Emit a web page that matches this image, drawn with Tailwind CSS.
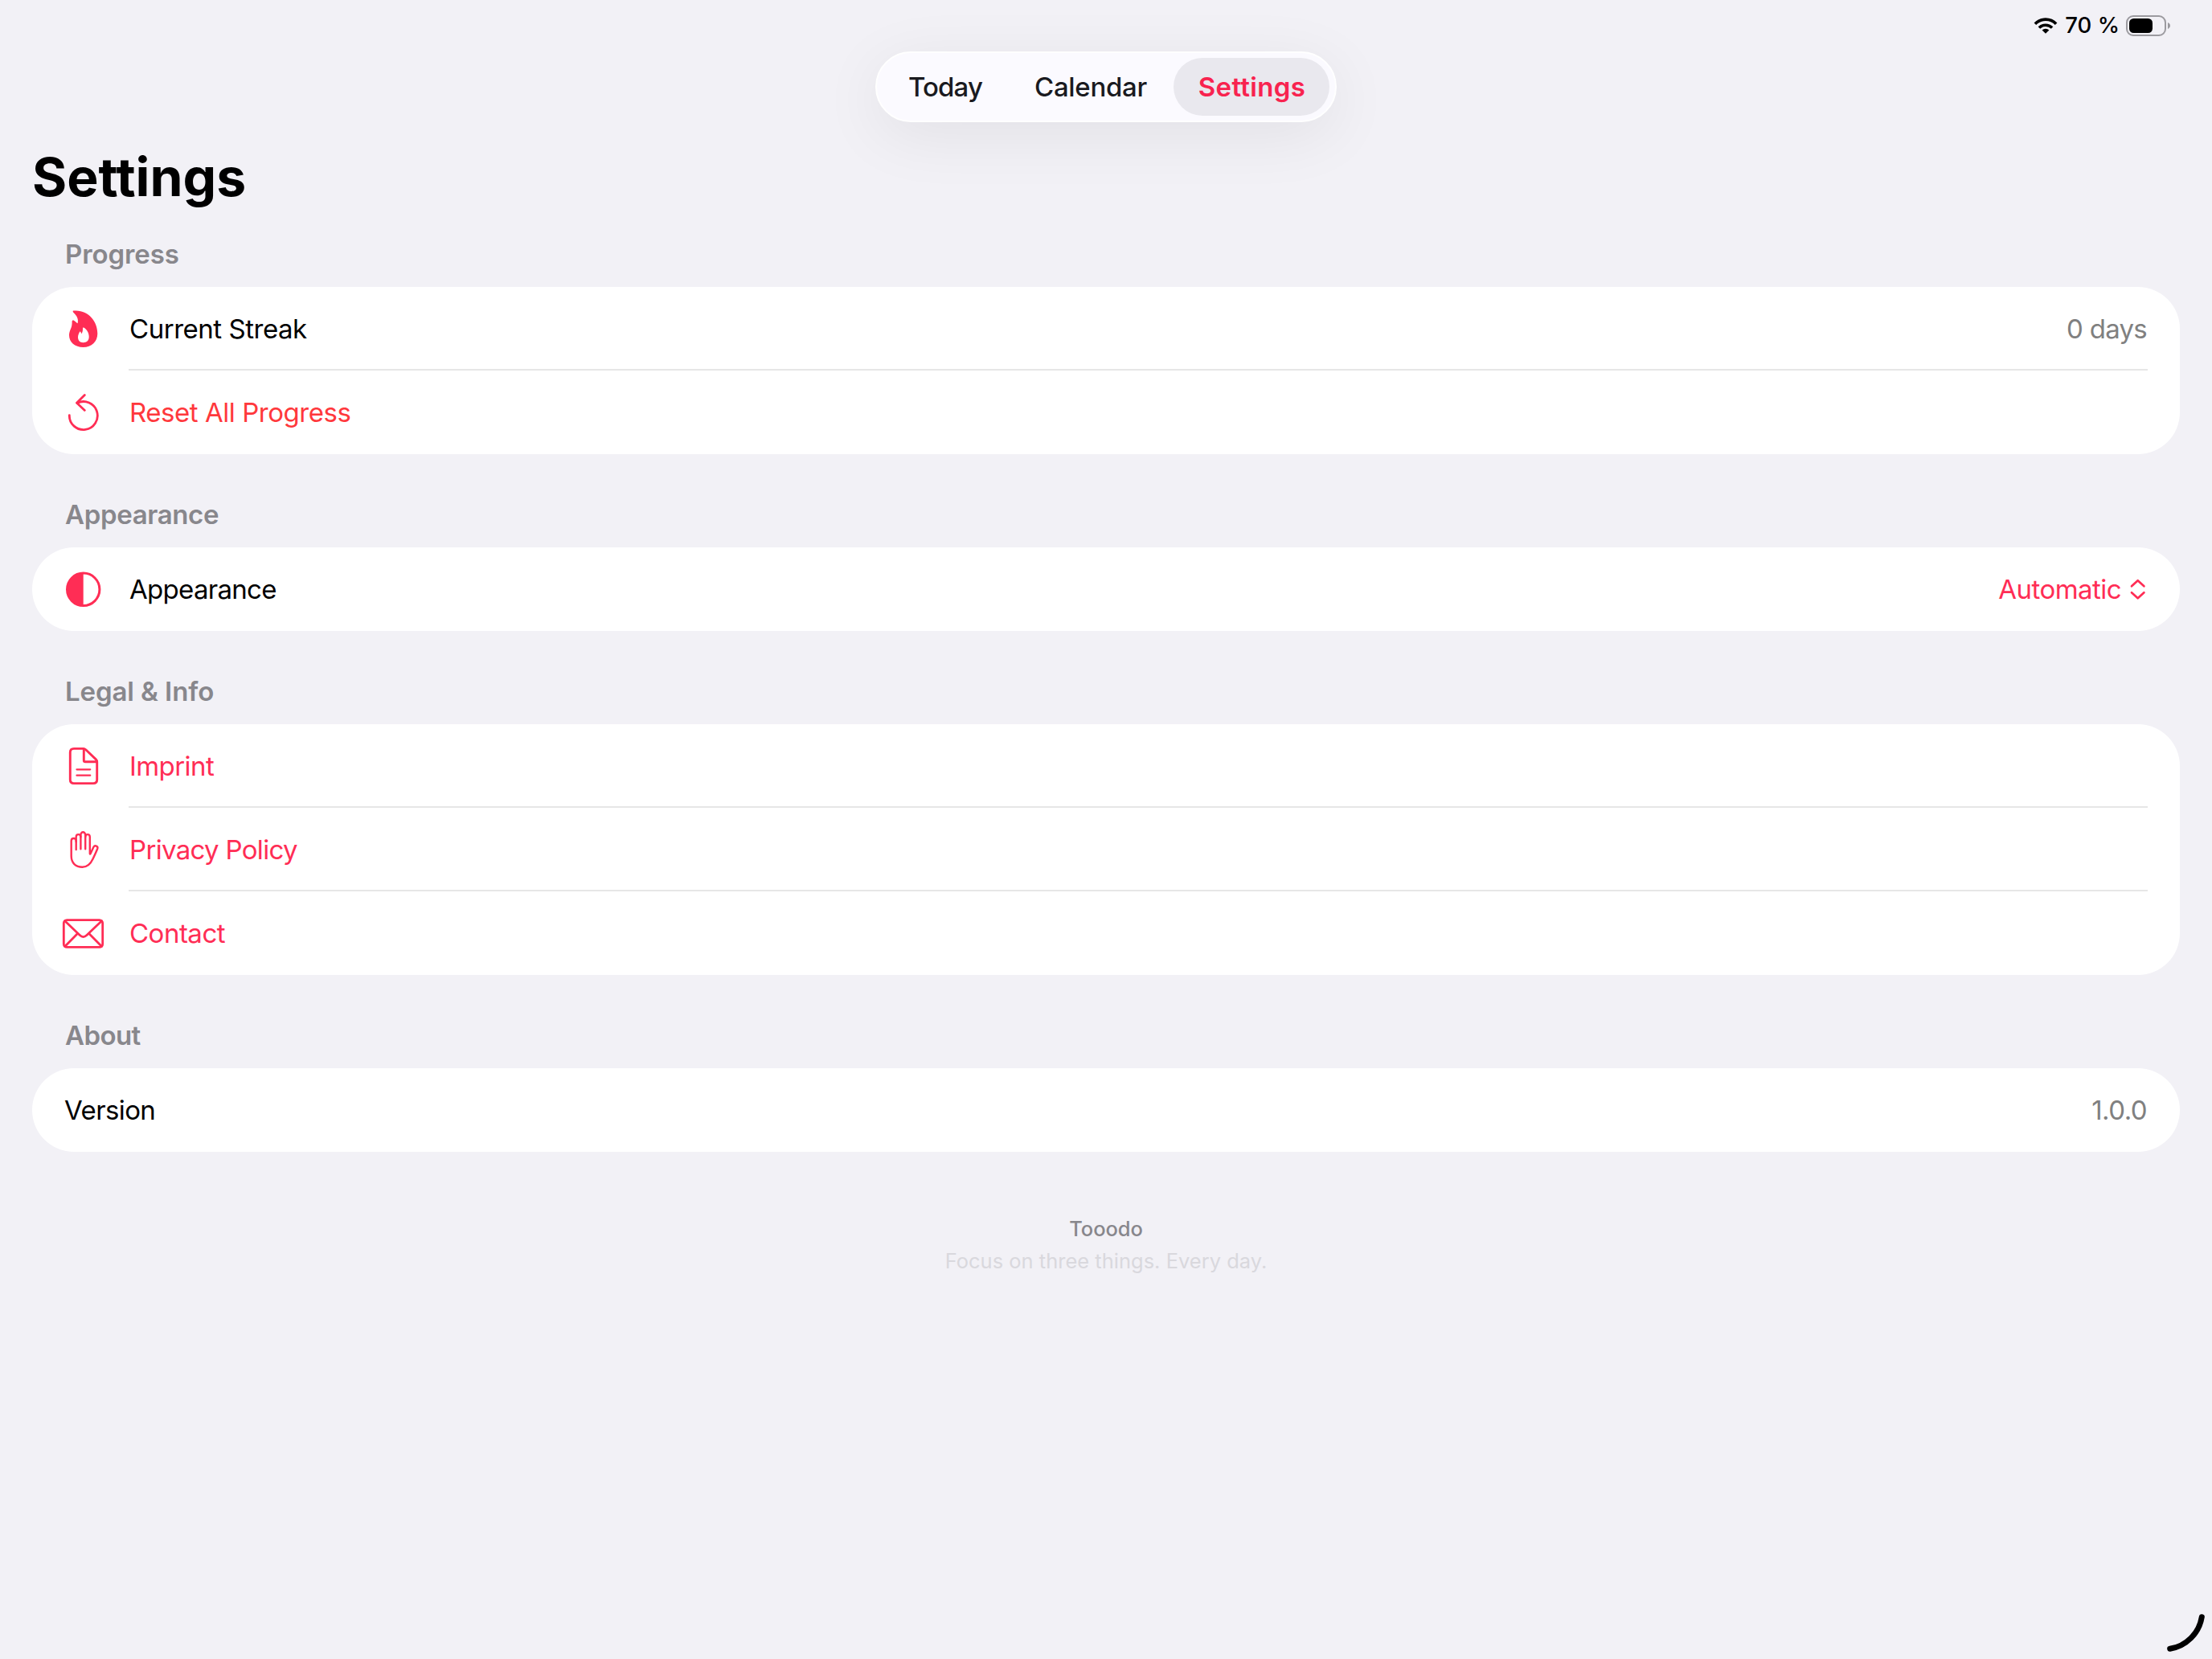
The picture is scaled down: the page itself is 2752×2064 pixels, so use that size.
<!DOCTYPE html>
<html lang="en">
  <head>
    <meta charset="UTF-8" />
    <meta name="viewport" content="width=device-width, initial-scale=1.0" />
    <title>Tooodo – Settings</title>
    <script src="https://cdn.jsdelivr.net/npm/@tailwindcss/browser@4"></script>
  </head>
  <body class="relative min-h-screen overflow-x-hidden bg-[#f2f1f6] font-['Inter',sans-serif] text-[33px] leading-none text-black">
    <!-- Status bar -->
    <div class="flex h-16 items-center justify-end pr-[52px]">
      <svg class="mr-[9px] h-[22px] w-[30px]" viewBox="0 0 30 22" fill="none" stroke="black" stroke-width="3.6">
        <path d="M1.9 8.8A18 18 0 0 1 28.1 8.8" />
        <path d="M6.9 13.5A11.6 11.6 0 0 1 23.1 13.5" />
        <path d="M15 20.8L10.6 16.6A6.2 6.2 0 0 1 19.4 16.6Z" fill="black" stroke="none" />
      </svg>
      <span class="mr-[7px] text-[27.5px] font-medium">70 %</span>
      <svg class="h-7 w-14" viewBox="0 0 56 28" fill="none">
        <rect x="2" y="2" width="48" height="24" rx="8" stroke="#9b9a9f" stroke-width="2" />
        <rect x="5" y="5" width="29" height="18" rx="5.5" fill="black" />
        <path d="M53 10C54.8 10.8 56 12.2 56 14S54.8 17.2 53 18Z" fill="#9b9a9f" />
      </svg>
    </div>

    <!-- Tab bar -->
    <nav class="mx-auto flex h-[88px] w-[574px] rounded-full border-2 border-white bg-[#fbfaff] px-[7px] py-1.5 font-medium text-[#1a1a1f] shadow-[0_16px_80px_rgba(0,0,0,0.07)]">
      <a class="flex w-[156px] items-center justify-center tracking-[-0.88px]">Today</a>
      <a class="flex w-[206px] items-center justify-center tracking-[-0.3px]">Calendar</a>
      <a class="flex w-[194px] items-center justify-center rounded-full bg-[#e9e8ee] pl-px font-semibold tracking-[0.33px] text-[#f8234f]">Settings</a>
    </nav>

    <main class="mt-[13px] px-10">
      <h1 class="flex h-[110px] items-center text-[66px] font-bold">Settings</h1>

      <!-- Progress -->
      <section class="mb-[34px]">
        <h2 class="flex h-[82px] items-center pl-[41px] font-semibold tracking-[-0.1px] text-[#88878c]">Progress</h2>
        <div class="rounded-[52px] bg-white pr-10 pl-8">
          <div class="flex h-[104px] items-center">
            <svg class="mr-6 size-16" viewBox="0 0 64 64" fill="#ff2d55" fill-rule="evenodd">
              <path d="M19.5 9.6C38 8 49.3 23 49.3 38C49.3 48 42 55 31.5 55C21 55 14 48.5 14 40C14 34 18 31 17.6 23.5C17.4 21.3 19 21 20.3 21.9C22.5 23.3 23.2 24.7 24.6 25.2C26 20 23.5 16 20 12.6C18.6 11.3 18 9.8 19.5 9.6ZM32 30.6C36 32.5 38.7 37.5 38.7 42C38.7 46.8 35.5 49.2 31.5 49.2C27.6 49.2 25 46.6 25 42.5C25 39.5 26.3 37.5 27 36C27.6 35 28.4 35.6 28.6 36.5L29.2 38.3C31 36.5 31 33.5 31 31.2C31 30.5 31.4 30.3 32 30.6Z" />
            </svg>
            <div class="flex h-full flex-1 items-center justify-between px-px shadow-[inset_0_-2px_0_#e6e6e6]">
              <span class="tracking-[-0.47px]">Current Streak</span>
              <span class="tracking-[-0.74px] text-[#808080]">0 days</span>
            </div>
          </div>
          <div class="flex h-[104px] items-center">
            <svg class="mr-6 size-16" viewBox="0 0 64 64" fill="none" stroke="#ff2d55" stroke-width="2.8" stroke-linecap="round" stroke-linejoin="round">
              <path d="M14.3 35.6A17.5 17.5 0 1 0 24 20.4" />
              <path d="M33.3 10.4L23.5 20.2L33.3 29.4" />
            </svg>
            <span class="pl-px tracking-[-0.46px] text-[#ff383c]">Reset All Progress</span>
          </div>
        </div>
      </section>

      <!-- Appearance -->
      <section class="mb-[34px]">
        <h2 class="flex h-[82px] items-center pl-[41px] font-semibold tracking-[-0.35px] text-[#88878c]">Appearance</h2>
        <div class="rounded-[52px] bg-white pr-10 pl-8">
          <div class="flex h-[104px] items-center">
            <svg class="mr-6 size-16" viewBox="0 0 64 64">
              <circle cx="31.7" cy="32.3" r="20.2" fill="none" stroke="#ff2d55" stroke-width="3" />
              <path d="M31.7 12A20.3 20.3 0 0 0 31.7 52.6Z" fill="#ff2d55" />
            </svg>
            <div class="flex flex-1 items-center justify-between pl-px">
              <span class="tracking-[-0.7px]">Appearance</span>
              <span class="flex items-center gap-[9px] tracking-[-0.55px] text-[#ff2d55]">
                Automatic
                <svg class="h-8 w-6" viewBox="0 0 24 32" fill="none" stroke="#ff2d55" stroke-width="2.7" stroke-linecap="round" stroke-linejoin="round">
                  <path d="M4 12.3L11.7 5.2L19.4 12.3M4 20.2L11.7 27.3L19.4 20.2" />
                </svg>
              </span>
            </div>
          </div>
        </div>
      </section>

      <!-- Legal -->
      <section class="mb-[34px]">
        <h2 class="flex h-[82px] items-center pl-[41px] font-semibold tracking-[-0.1px] text-[#88878c]">Legal &amp; Info</h2>
        <div class="rounded-[52px] bg-white pr-10 pl-8 text-[#ff2d55]">
          <div class="flex h-[104px] items-center">
            <svg class="mr-6 size-16" viewBox="0 0 64 64" fill="none" stroke="currentColor" stroke-width="2.9" stroke-linecap="round" stroke-linejoin="round">
              <path d="M20 10.4H31.5C33 10.4 33.8 10.8 34.8 11.8L47.2 23.6C48.3 24.7 48.7 25.5 48.7 27V49C48.7 52 47 53.6 44 53.6H20C17 53.6 15.3 52 15.3 49V15C15.3 12 17 10.4 20 10.4Z" />
              <path d="M32.3 11V25C32.3 26.2 33 26.8 34.2 26.8H48" />
              <path d="M23.5 36.3H40.2M23.5 43.7H40.2" stroke-width="2.3" />
            </svg>
            <div class="flex h-full flex-1 items-center pl-px tracking-[-0.58px] shadow-[inset_0_-2px_0_#e6e6e6]">Imprint</div>
          </div>
          <div class="flex h-[104px] items-center">
            <svg class="mr-6 size-16" viewBox="0 0 64 64" fill="none" stroke="currentColor" stroke-width="2.4" stroke-linecap="round" stroke-linejoin="round">
              <path d="M22.7 32V21.2C22.7 17 16.7 17 16.7 21.2V40C16.7 48.5 22 53.7 30.5 53.7C38 53.7 41.3 48.5 43.6 43.5C45.5 39.5 48 34 49.2 31C50.4 27.5 46 26 44.3 29L40.5 37.2C40.2 37.8 39.8 37.6 39.8 37V16.3C39.8 12 34.2 12 34.2 16.3" />
              <path d="M34.2 31.2V14C34.2 9 28.4 9 28.4 14V31.2" />
              <path d="M28.4 16.3C28.4 12 22.7 12 22.7 16.3V22" />
            </svg>
            <div class="flex h-full flex-1 items-center pl-px tracking-[-0.68px] shadow-[inset_0_-2px_0_#e6e6e6]">Privacy Policy</div>
          </div>
          <div class="flex h-[104px] items-center">
            <svg class="mr-6 size-16" viewBox="0 0 64 64" fill="none" stroke="currentColor" stroke-width="2.8" stroke-linecap="round" stroke-linejoin="round">
              <rect x="7.3" y="15.6" width="48.4" height="33.8" rx="4" />
              <path d="M8.7 16.8L27.3 34.6C30.4 37.5 32.8 37.5 35.9 34.6L54.5 16.8" />
              <path d="M8.7 48.6L24.2 32.8M54.5 48.6L39 32.8" />
            </svg>
            <span class="pl-px tracking-[-0.5px]">Contact</span>
          </div>
        </div>
      </section>

      <!-- About -->
      <section>
        <h2 class="flex h-[82px] items-center pl-[41px] font-semibold tracking-[-0.6px] text-[#88878c]">About</h2>
        <div class="flex h-[104px] items-center justify-between rounded-[52px] bg-white pr-[41px] pl-10">
          <span class="tracking-[-0.6px]">Version</span>
          <span class="tracking-[-0.56px] text-[#808080]">1.0.0</span>
        </div>
      </section>

      <footer class="mt-[76px] text-center text-[25.5px] leading-10">
        <p class="font-medium tracking-[-0.1px] text-[#88878c]">Tooodo</p>
        <p class="text-[#d9d8dd]">Focus on three things. Every day.</p>
      </footer>
    </main>

    <!-- Window resize handle -->
    <svg class="absolute top-[1964px] right-0 size-[100px]" viewBox="0 0 100 100" fill="none" stroke="black" stroke-width="7" stroke-linecap="round">
      <path d="M87.3 47.7A48 48 0 0 1 47.7 87.3" />
    </svg>
  </body>
</html>
